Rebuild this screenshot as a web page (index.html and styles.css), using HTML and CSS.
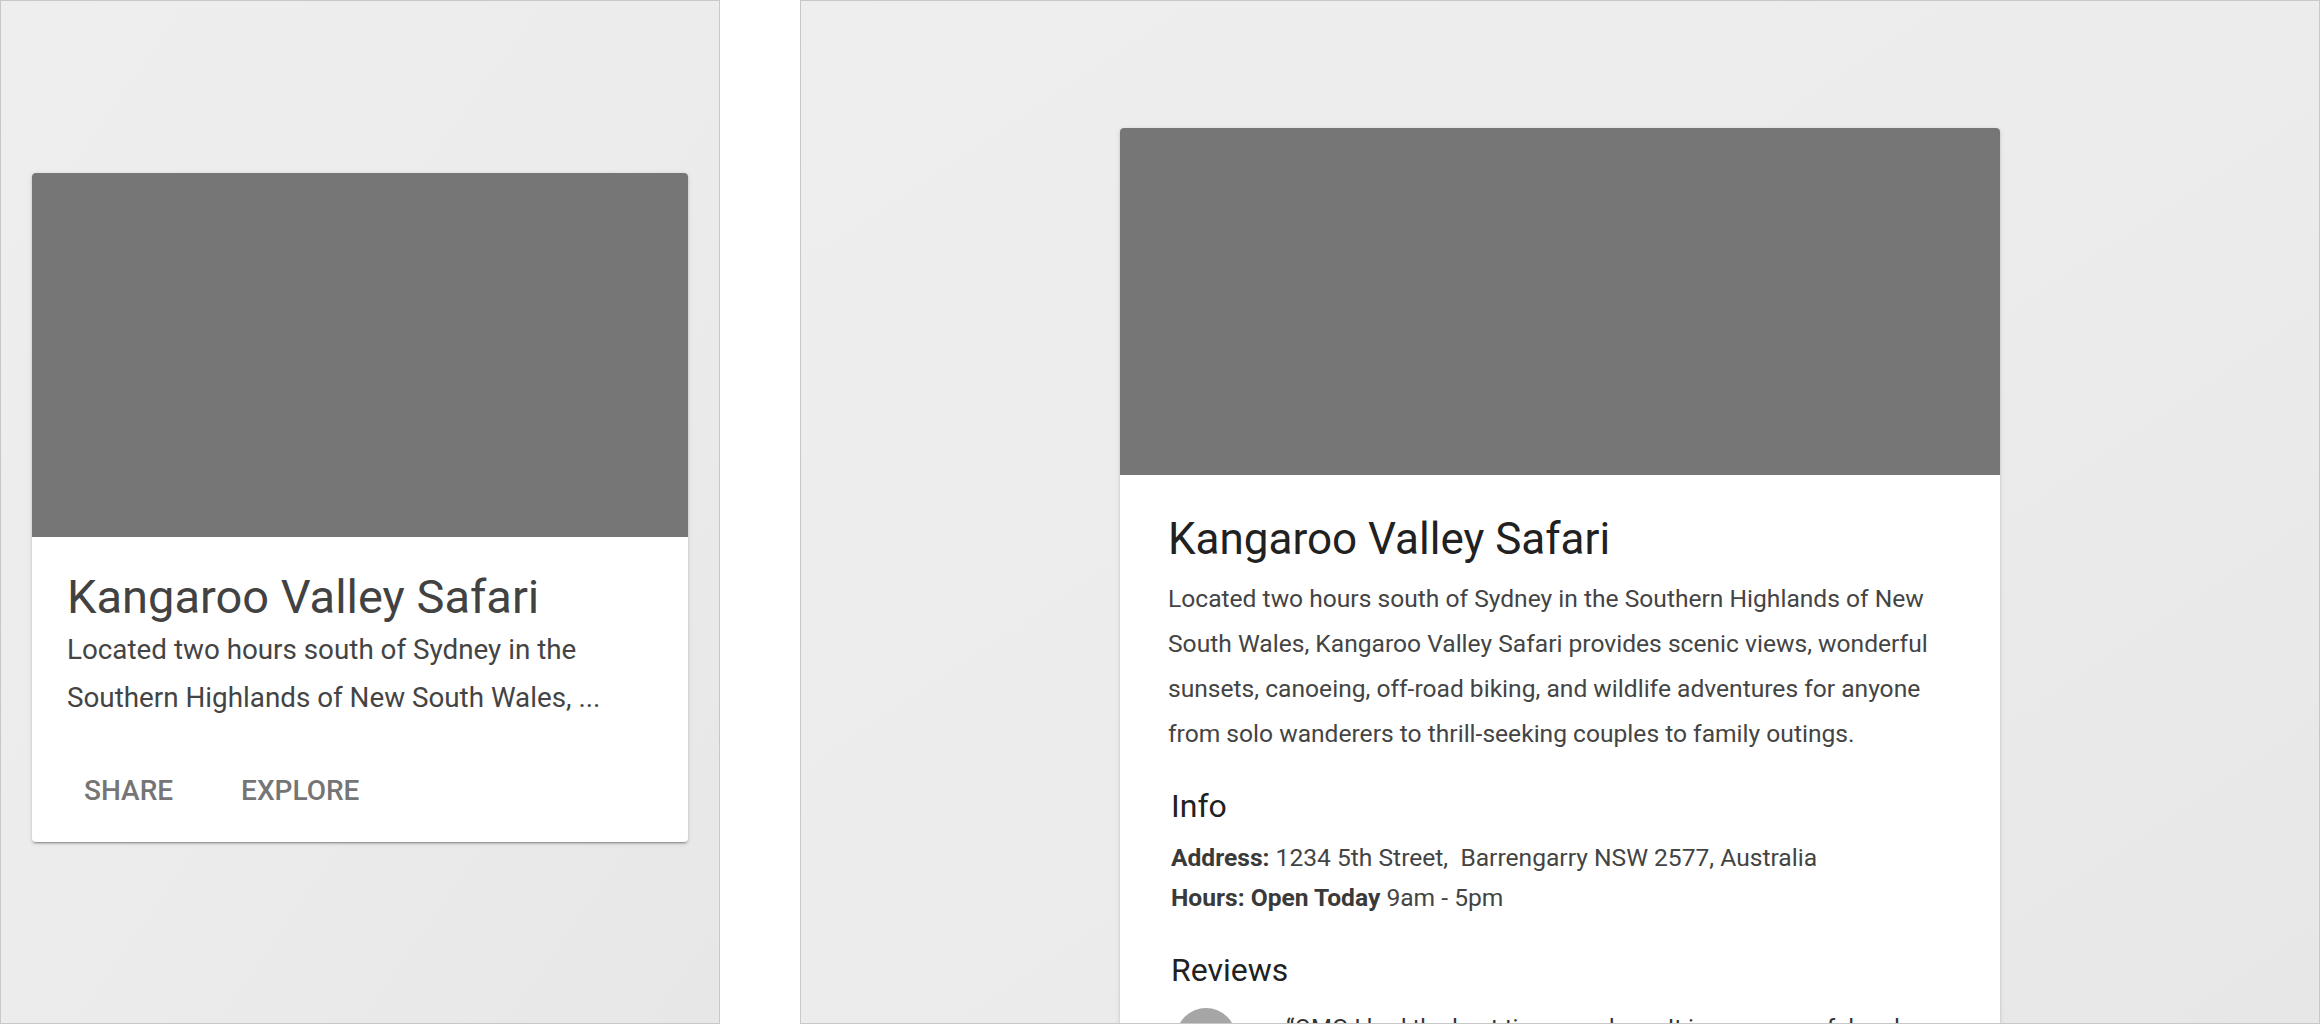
FILE: index.html
```html
<!DOCTYPE html>
<html lang="en">
<head>
<meta charset="utf-8">
<title>Kangaroo Valley Safari</title>
<link rel="stylesheet" href="styles.css">
</head>
<body>
<div class="stage">
  <section class="panel panel-phone">
    <article class="card card-small">
      <div class="card-image"></div>
      <div class="card-body">
        <h1 class="card-title">Kangaroo Valley Safari</h1>
        <p class="card-text">Located two hours south of Sydney in the Southern Highlands of New South Wales, ...</p>
      </div>
      <div class="card-actions">
        <button class="btn">Share</button>
        <button class="btn">Explore</button>
      </div>
    </article>
  </section>
  <section class="panel panel-tablet">
    <article class="card card-large">
      <div class="card-image card-image-large"></div>
      <div class="card-body-large">
        <h1 class="title-large">Kangaroo Valley Safari</h1>
        <p class="text-large">Located two hours south of Sydney in the Southern Highlands of New South Wales, Kangaroo Valley Safari provides scenic views, wonderful sunsets, canoeing, off-road biking, and wildlife adventures for anyone from solo wanderers to thrill-seeking couples to family outings.</p>
        <div class="section">
          <h2 class="section-title">Info</h2>
          <div class="info-line"><b>Address:</b> 1234 5th Street,&nbsp; Barrengarry NSW 2577, Australia</div>
          <div class="info-line"><b>Hours: Open Today</b> 9am - 5pm</div>
        </div>
        <div class="section">
          <h2 class="section-title section-title-reviews">Reviews</h2>
          <div class="review">
            <div class="avatar"></div>
            <p class="review-text">“OMG I had the best time ever here. It is very peaceful and relaxing, and the staff were wonderful. Highly recommended for the whole family.”</p>
          </div>
        </div>
      </div>
    </article>
  </section>
</div>
</body>
</html>
```
FILE: styles.css
```css
* { box-sizing: border-box; }
html, body { margin: 0; padding: 0; background: #ffffff; }
body { font-family: Roboto, "Noto Sans", "Liberation Sans", sans-serif; }

.stage {
  display: flex;
  gap: 80px;
  width: 2320px;
  height: 1024px;
}

.panel {
  height: 1024px;
  border: 1px solid #c8c8c8;
  background: linear-gradient(to bottom right, #eeeeee 0%, #ececec 50%, #e7e7e7 100%);
  overflow: hidden;
  display: flex;
  flex-direction: column;
}
.panel-phone { width: 720px; padding: 172px 31px 0; }
.panel-tablet { width: 1520px; padding-top: 127px; align-items: center; }

.card {
  background: #ffffff;
  border-radius: 4px;
  overflow: hidden;
  flex-shrink: 0;
  box-shadow: 0 2px 2px rgba(0,0,0,0.14), 0 1px 5px rgba(0,0,0,0.12), 0 3px 1px -2px rgba(0,0,0,0.2);
}
.card-small { width: 656px; }
.card-large { width: 880px; }

.card-image { height: 364px; background: #767676; }
.card-image-large { height: 347px; }

.card-body { padding: 32px 32px 17px 35px; }
.card-title {
  margin: 0;
  font-size: 47px;
  line-height: 56px;
  font-weight: 400;
  color: #424242;
}
.card-text {
  margin: 1px 0 0;
  font-size: 27.8px;
  line-height: 48px;
  color: #444444;
}
.card-actions { display: flex; gap: 16px; padding: 16px 16px 15px 26px; }
.btn {
  font-family: inherit;
  font-size: 28px;
  font-weight: 500;
  text-transform: uppercase;
  color: #757575;
  background: none;
  border: 0;
  height: 72px;
  line-height: 72px;
  padding: 0 26px;
}

.card-body-large { padding: 38px 48px 40px; }
.title-large {
  margin: 0;
  font-size: 44px;
  line-height: 52px;
  font-weight: 400;
  color: #212121;
}
.text-large {
  margin: 11px 0 0;
  font-size: 24.6px;
  line-height: 45px;
  color: #444444;
}
.section { padding-left: 3px; }
.section-title {
  margin: 30px 0 0;
  font-size: 32px;
  line-height: 40px;
  font-weight: 400;
  color: #212121;
}
.section-title-reviews { margin-top: 32px; }
.info-line {
  font-size: 24.6px;
  line-height: 40px;
  color: #444444;
}
.info-line:first-of-type { margin-top: 12px; }
.info-line b { font-weight: 700; color: #3a3a3a; }

.review { display: flex; gap: 50px; margin-top: 18px; }
.avatar {
  width: 60px;
  height: 60px;
  border-radius: 50%;
  background: #a6a6a6;
  flex-shrink: 0;
  margin-left: 5px;
}
.review-text {
  margin: 0;
  font-size: 24px;
  line-height: 40px;
  color: #333333;
}
```
